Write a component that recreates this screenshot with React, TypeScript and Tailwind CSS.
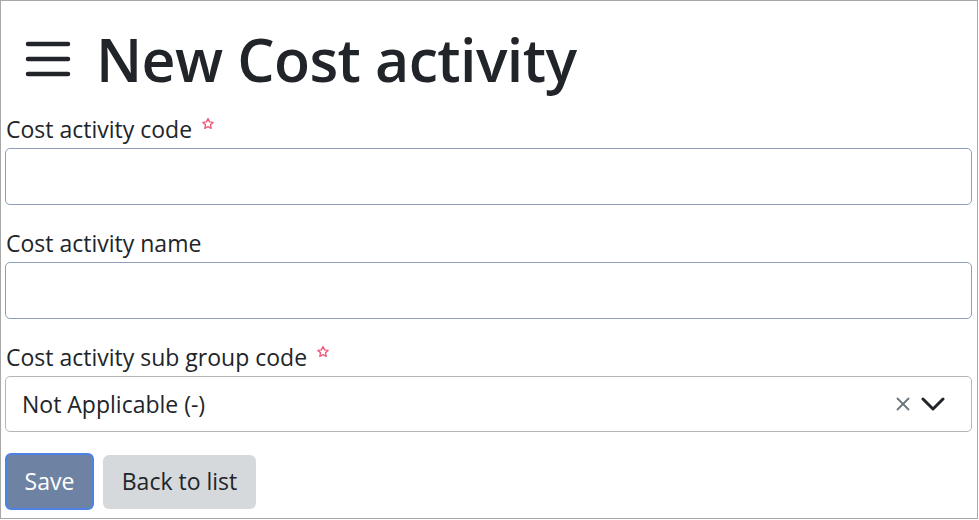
import React from 'react';

const Star: React.FC = () => (
    <svg viewBox="0 0 24 24" className="w-[14px] h-[14px] ml-[9px] -mt-[11px]" fill="none" stroke="#ee5b7a" strokeWidth={2.4} strokeLinejoin="round">
        <path d="M12 2.8l2.7 5.6 6.1.8-4.5 4.2 1.1 6.1L12 16.6l-5.4 2.9 1.1-6.1-4.5-4.2 6.1-.8z" />
    </svg>
);

const Label: React.FC<{ text: string; required?: boolean }> = ({ text, required }) => (
    <label className="flex items-center text-[23px] leading-[28px] text-[#212529] pl-[1px] mb-[5px]">
        {text}
        {required && <Star />}
    </label>
);

const TextInput: React.FC = () => (
    <input type="text" className="block w-full h-[57px] rounded-[5px] border border-[#8e9fbd] bg-white outline-none" />
);

export default function App() {
    return (
        <div className="w-[979px] h-[520px] bg-white" style={{ fontFamily: '"Open Sans", "Noto Sans", sans-serif' }}>
            <div className="w-[978px] h-[519px] border border-[#a8a8a8] pl-[4px] pr-[5px]">
                <div className="flex items-center h-[114px] pl-[20px] pt-[2px]">
                    <svg viewBox="0 0 46 36" className="w-[46px] h-[36px] mr-[25px]">
                        <g stroke="#212529" strokeWidth={4.5} strokeLinecap="round">
                            <line x1="3" y1="3" x2="43" y2="3" />
                            <line x1="3" y1="18" x2="43" y2="18" />
                            <line x1="3" y1="33" x2="43" y2="33" />
                        </g>
                    </svg>
                    <h1 className="text-[59px] leading-none font-semibold text-[#212529] tracking-[-0.6px]">New Cost activity</h1>
                </div>
                <div className="flex flex-col">
                    <Label text="Cost activity code" required />
                    <TextInput />
                    <div className="h-[24px]" />
                    <Label text="Cost activity name" />
                    <TextInput />
                    <div className="h-[24px]" />
                    <Label text="Cost activity sub group code" required />
                    <div className="flex items-center h-[56px] rounded-[5px] border border-[#b5b5b5] pl-[16px] pr-[26px]">
                        <span className="flex-1 text-[23px] text-[#212529]">Not Applicable (-)</span>
                        <svg viewBox="0 0 16 16" className="w-[16px] h-[16px] mr-[10px]" stroke="#6c757d" strokeWidth={1.8} strokeLinecap="round">
                            <line x1="2.5" y1="2.5" x2="13.5" y2="13.5" />
                            <line x1="13.5" y1="2.5" x2="2.5" y2="13.5" />
                        </svg>
                        <svg viewBox="0 0 24 16" className="w-[24px] h-[16px]" fill="none" stroke="#212529" strokeWidth={3} strokeLinecap="round" strokeLinejoin="round">
                            <polyline points="2,3 12,13 22,3" />
                        </svg>
                    </div>
                    <div className="flex items-center gap-[9px] mt-[21px]">
                        <button className="h-[57px] w-[89px] rounded-[6px] border-2 border-[#4f82e6] bg-[#6e83a3] text-white text-[23px]">Save</button>
                        <button className="h-[54px] w-[153px] rounded-[6px] bg-[#d6d9dc] text-[#212529] text-[23px]">Back to list</button>
                    </div>
                </div>
            </div>
        </div>
    );
}
